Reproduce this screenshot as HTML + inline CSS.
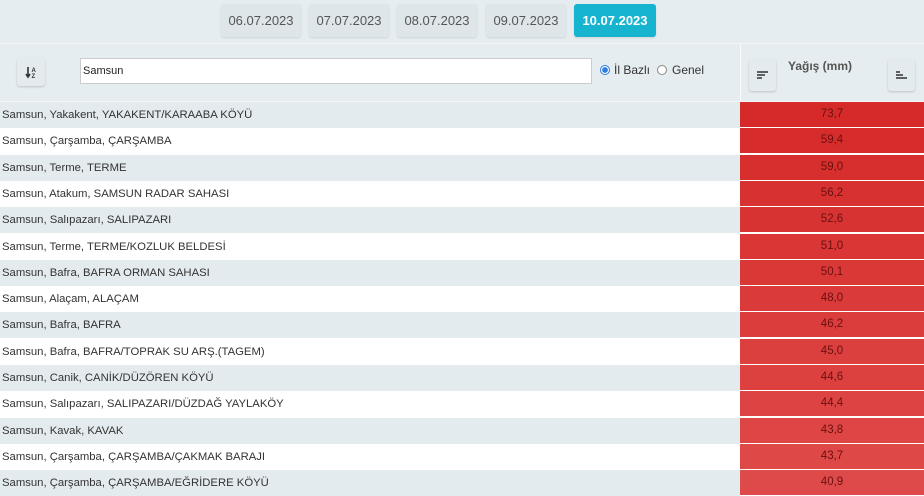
<html><head><style>
body{margin:0;width:924px;height:496px;overflow:hidden;background:#fff;font-family:"Liberation Sans",sans-serif;position:relative}
.top{position:absolute;left:0;top:0;width:924px;height:43px;background:#e6edf0;border-bottom:1px solid #f4f7f8}
.d{position:absolute;top:4px;height:33px;width:80px;background:#dfe6ea;color:#555;font-size:13px;line-height:33px;text-align:center;border-radius:3px;box-shadow:0 1px 2px rgba(0,0,0,.1)}
.d.a{background:#17b4cf;color:#fff;font-weight:bold;width:82px}
.hdr{position:absolute;left:0;top:44px;width:924px;height:57px;background:#e6edf0}
.btn{position:absolute;background:#e4ebee;border-radius:3px;box-shadow:0 1px 2px rgba(0,0,0,.18)}
.row{position:absolute;left:0;width:740px;height:26px;font-size:11.3px;line-height:26px;color:#333;padding-left:2px;box-sizing:border-box}
.val{position:absolute;left:740px;width:184px;height:25px;font-size:11.5px;line-height:25px;text-align:center;color:#6b1010}
</style></head><body>
<div class="top">
<div class="d" style="left:221px">06.07.2023</div>
<div class="d" style="left:309px">07.07.2023</div>
<div class="d" style="left:397px">08.07.2023</div>
<div class="d" style="left:486px">09.07.2023</div>
<div class="d a" style="left:574px">10.07.2023</div>
</div>
<div class="hdr">
<div class="btn" style="left:17px;top:14px;width:28px;height:28px"><svg width="28" height="28"><path d="M11 9v10M9 16l2 3 2-3" stroke="#333" stroke-width="1.6" fill="none"/><text x="14.5" y="14" font-size="6" font-family="Liberation Sans" fill="#333" font-weight="bold">A</text><text x="14.5" y="20" font-size="6" font-family="Liberation Sans" fill="#333" font-weight="bold">Z</text></svg></div>
<div style="position:absolute;left:80px;top:14px;width:512px;height:26px;background:#fff;border:1px solid #ccc;box-sizing:border-box;font-size:11px;line-height:24px;padding-left:2px;color:#222">Samsun</div>
<div style="position:absolute;left:600px;top:21px;width:8px;height:8px;border-radius:50%;border:1px solid #2b7be0;background:radial-gradient(#2b7be0 45%,#fff 55%)"></div>
<div style="position:absolute;left:614px;top:19px;font-size:12px;color:#333">İl Bazlı</div>
<div style="position:absolute;left:657px;top:21px;width:8px;height:8px;border-radius:50%;border:1px solid #888;background:#fff"></div>
<div style="position:absolute;left:672px;top:19px;font-size:12px;color:#333">Genel</div>
<div style="position:absolute;left:740px;top:0;width:1px;height:57px;background:#fafcfc"></div>
<div class="btn" style="left:749px;top:15px;width:27px;height:32px"><svg width="27" height="32"><path d="M8 13h11M8 16h8M8 19h5" stroke="#333" stroke-width="1.5"/></svg></div>
<div style="position:absolute;left:770px;top:15px;width:100px;text-align:center;font-size:12px;font-weight:bold;color:#555">Yağış (mm)</div>
<div class="btn" style="left:888px;top:15px;width:27px;height:32px"><svg width="27" height="32"><path d="M8 13h4M8 16h7M8 19h11" stroke="#333" stroke-width="1.5"/></svg></div>
</div>
<div style="position:absolute;left:0;top:101px;width:924px;height:1px;background:#f4f7f8"></div>
<div id="rows"></div>
<script>
var d=[["Yakakent, YAKAKENT/KARAABA KÖYÜ","73,7"],["Çarşamba, ÇARŞAMBA","59,4"],["Terme, TERME","59,0"],["Atakum, SAMSUN RADAR SAHASI","56,2"],["Salıpazarı, SALIPAZARI","52,6"],["Terme, TERME/KOZLUK BELDESİ","51,0"],["Bafra, BAFRA ORMAN SAHASI","50,1"],["Alaçam, ALAÇAM","48,0"],["Bafra, BAFRA","46,2"],["Bafra, BAFRA/TOPRAK SU ARŞ.(TAGEM)","45,0"],["Canik, CANİK/DÜZÖREN KÖYÜ","44,6"],["Salıpazarı, SALIPAZARI/DÜZDAĞ YAYLAKÖY","44,4"],["Kavak, KAVAK","43,8"],["Çarşamba, ÇARŞAMBA/ÇAKMAK BARAJI","43,7"],["Çarşamba, ÇARŞAMBA/EĞRİDERE KÖYÜ","40,9"]];
var h="";
for(var i=0;i<d.length;i++){var t=102+i*26.3;var g=Math.round(42+i*2.3),b=Math.round(42+i*2.2);
h+='<div class="row" style="top:'+t+'px;background:'+(i%2?'#fff':'#e4ebee')+'">Samsun, '+d[i][0]+'</div>';
h+='<div class="val" style="top:'+t+'px;background:rgb('+(214+Math.round(i*0.6))+','+g+','+b+')">'+d[i][1]+'</div>';}
document.getElementById('rows').innerHTML=h;
</script>
</body></html>
